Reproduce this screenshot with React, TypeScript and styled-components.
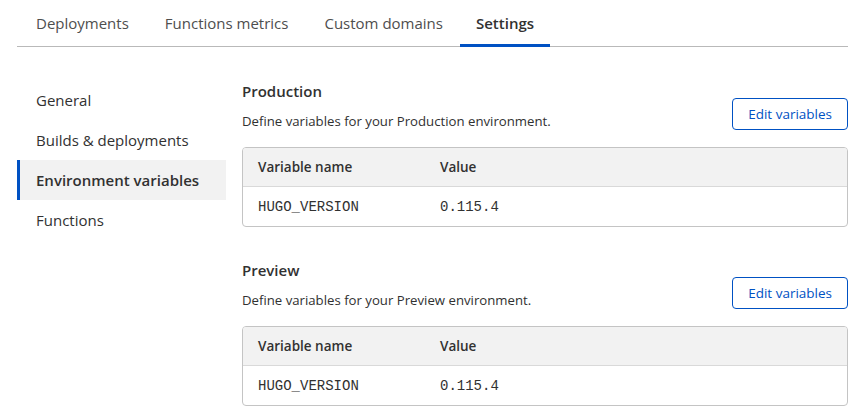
import React from 'react';
import styled, { createGlobalStyle } from 'styled-components';

const GlobalStyle = createGlobalStyle`
  html, body {
    margin: 0;
    padding: 0;
    background: #fff;
  }
  body {
    font-family: 'Open Sans', 'Noto Sans', sans-serif;
    color: #313131;
  }
`;

const tabs = ['Deployments', 'Functions metrics', 'Custom domains', 'Settings'];
const menu = ['General', 'Builds & deployments', 'Environment variables', 'Functions'];

const environments = [
  {
    name: 'Production',
    vars: [{ name: 'HUGO_VERSION', value: '0.115.4' }],
  },
  {
    name: 'Preview',
    vars: [{ name: 'HUGO_VERSION', value: '0.115.4' }],
  },
];

function EnvironmentSection({ env }) {
  return (
    <Section>
      <SectionHead>
        <div>
          <SectionTitle>{env.name}</SectionTitle>
          <SectionDesc>Define variables for your {env.name} environment.</SectionDesc>
        </div>
        <EditButton>Edit variables</EditButton>
      </SectionHead>
      <Table>
        <HeaderRow>
          <HeadCell>Variable name</HeadCell>
          <HeadCell>Value</HeadCell>
        </HeaderRow>
        {env.vars.map((v) => (
          <BodyRow key={v.name}>
            <MonoCell>{v.name}</MonoCell>
            <MonoCell>{v.value}</MonoCell>
          </BodyRow>
        ))}
      </Table>
    </Section>
  );
}

export default function App() {
  return (
    <>
      <GlobalStyle />
      <Page>
        <TabBar>
          {tabs.map((t) => (
            <Tab key={t} active={t === 'Settings'}>
              {t}
            </Tab>
          ))}
        </TabBar>
        <Body>
          <SideNav>
            {menu.map((m) => (
              <NavItem key={m} active={m === 'Environment variables'}>
                {m}
              </NavItem>
            ))}
          </SideNav>
          <Content>
            {environments.map((env) => (
              <EnvironmentSection key={env.name} env={env} />
            ))}
          </Content>
        </Body>
      </Page>
    </>
  );
}

const Page = styled.div`
  padding: 0 19px 0 17px;
`;

const TabBar = styled.div`
  display: flex;
  border-bottom: 1px solid #b9b9b9;
  height: 47px;
  box-sizing: border-box;
`;

const Tab = styled.div<{ active?: boolean }>`
  padding: 0 ${(p) => (p.active ? 16 : 17)}px 0 ${(p) => (p.active ? 16 : 19)}px;
  display: flex;
  align-items: center;
  font-size: 15px;
  height: 47px;
  box-sizing: border-box;
  color: ${(p) => (p.active ? '#313131' : '#4e4e4e')};
  font-weight: ${(p) => (p.active ? 600 : 400)};
  border-bottom: 3px solid ${(p) => (p.active ? '#0051c3' : 'transparent')};
  margin-bottom: -1px;
  padding-top: 1px;
`;

const Body = styled.div`
  display: flex;
  padding-top: 33px;
  gap: 16px;
`;

const SideNav = styled.div`
  width: 209px;
  flex-shrink: 0;
  display: flex;
  flex-direction: column;
`;

const NavItem = styled.div<{ active?: boolean }>`
  height: 40px;
  display: flex;
  align-items: center;
  padding-left: 16px;
  font-size: 15px;
  color: #313131;
  font-weight: ${(p) => (p.active ? 600 : 400)};
  background: ${(p) => (p.active ? '#f2f2f2' : 'transparent')};
  border-left: 3px solid ${(p) => (p.active ? '#0051c3' : 'transparent')};
`;

const Content = styled.div`
  flex: 1;
  display: flex;
  flex-direction: column;
  gap: 33px;
  padding-top: 1px;
`;

const Section = styled.div`
  display: flex;
  flex-direction: column;
`;

const SectionHead = styled.div`
  display: flex;
  justify-content: space-between;
  align-items: flex-start;
  margin-bottom: 17px;
`;

const SectionTitle = styled.div`
  font-size: 15px;
  font-weight: 600;
  color: #313131;
  line-height: 20px;
  margin-bottom: 11px;
`;

const SectionDesc = styled.div`
  font-size: 13.2px;
  color: #313131;
  line-height: 18px;
`;

const EditButton = styled.button`
  height: 32px;
  padding: 0 15px;
  margin-top: 17px;
  border: 1px solid #0051c3;
  border-radius: 4px;
  background: #fff;
  color: #0051c3;
  font-family: inherit;
  font-size: 13.5px;
  cursor: pointer;
`;

const Table = styled.div`
  border: 1px solid #c4c4c4;
  border-radius: 4px;
  overflow: hidden;
`;

const HeaderRow = styled.div`
  display: grid;
  grid-template-columns: 182px 1fr;
  height: 38px;
  align-items: center;
  background: #f2f2f2;
  border-bottom: 1px solid #d9d9d9;
  padding-left: 15px;
`;

const BodyRow = styled.div`
  display: grid;
  grid-template-columns: 182px 1fr;
  height: 39px;
  align-items: center;
  padding-left: 15px;
`;

const HeadCell = styled.div`
  font-size: 13.5px;
  font-weight: 600;
  color: #313131;
`;

const MonoCell = styled.div`
  font-family: 'Liberation Mono', 'Courier New', monospace;
  font-size: 14px;
  color: #313131;
`;
